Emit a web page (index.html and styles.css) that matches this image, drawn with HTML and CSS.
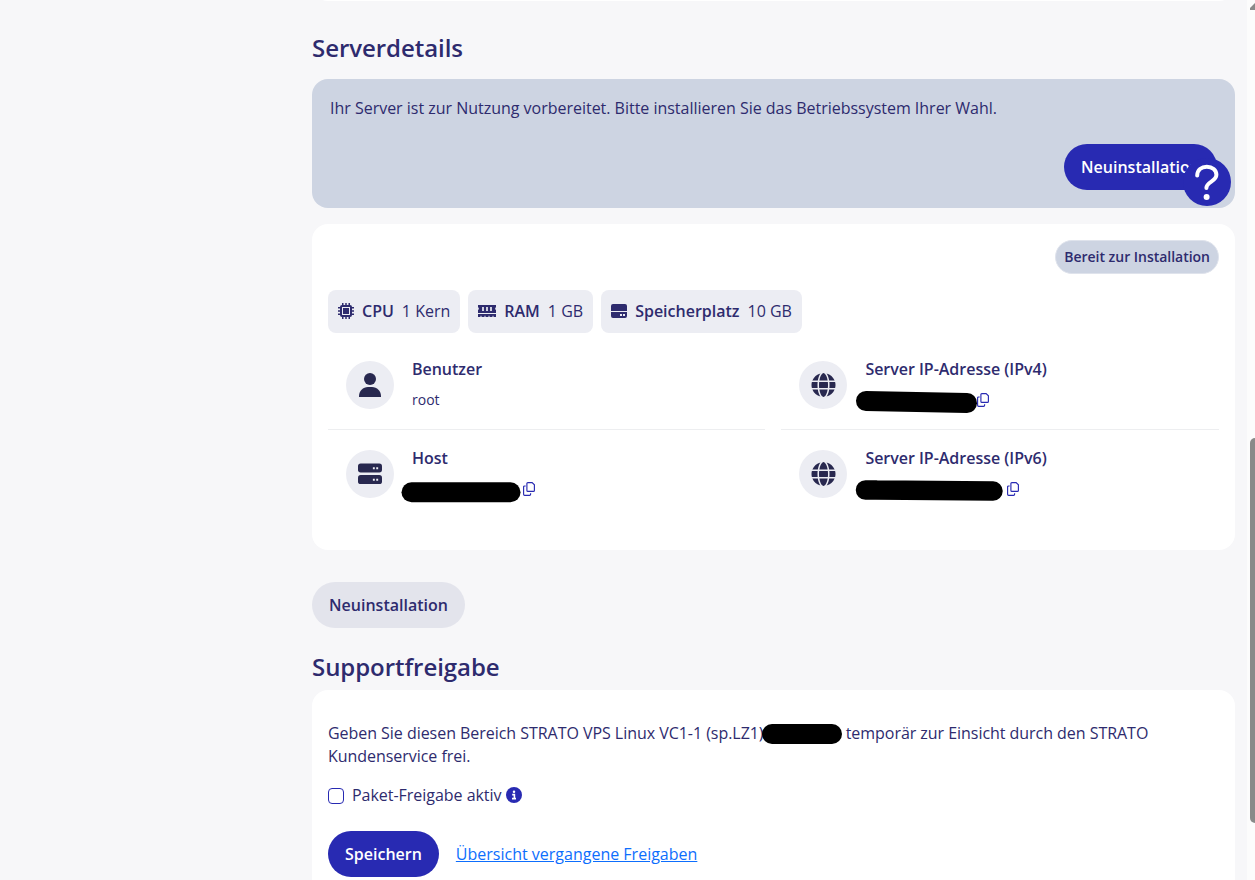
FILE: index.html
```html
<!DOCTYPE html>
<html lang="de">
<head>
<meta charset="utf-8">
<title>Serverdetails</title>
<link rel="stylesheet" href="styles.css">
</head>
<body>
<svg class="defs" width="0" height="0">
  <symbol id="globe" viewBox="0 0 512 512"><path d="M352 256c0 22.200-1.200 43.600-3.300 64H163.300c-2.200-20.400-3.300-41.800-3.300-64s1.200-43.600 3.300-64h185.400c2.200 20.400 3.300 41.800 3.300 64zm28.800-64h123.100c5.300 20.500 8.100 41.900 8.100 64s-2.800 43.500-8.100 64H380.800c2.100-20.600 3.200-42 3.200-64s-1.100-43.400-3.200-64zm112.600-32H376.700c-10-63.900-29.800-117.400-55.300-151.600 78.300 20.700 142 77.500 172 151.600zm-149.100 0H167.700c6.100-36.400 15.500-68.600 27-94.700 10.500-23.600 22.200-40.700 33.500-51.500C239.400 3.200 248.700 0 256 0s16.600 3.200 27.800 13.800c11.300 10.800 23 27.900 33.500 51.500 11.600 26 20.900 58.200 27 94.700zm-209 0H18.600C48.600 85.900 112.200 29.100 190.600 8.400 165.100 42.600 145.300 96.100 135.300 160zM8.100 192h123.100c-2.100 20.600-3.200 42-3.200 64s1.100 43.400 3.200 64H8.100C2.800 299.500 0 278.100 0 256s2.800-43.500 8.100-64zm186.600 254.600c-11.600-26-20.900-58.200-27-94.600h176.600c-6.100 36.400-15.500 68.600-27 94.600-10.500 23.600-22.200 40.700-33.500 51.500C272.600 508.800 263.300 512 256 512s-16.600-3.200-27.800-13.800c-11.300-10.800-23-27.900-33.500-51.600zM135.300 352c10 63.900 29.800 117.400 55.300 151.600C112.200 482.900 48.600 426.100 18.600 352h116.700zm358.100 0c-30 74.100-93.600 130.900-171.900 151.600 25.500-34.200 45.200-87.700 55.300-151.600h116.600z"/></symbol>
  <symbol id="copy" viewBox="0 0 12 14"><path d="M4.900.6h4.200l2.300 2.200v5.600q0 1-1 1H4.900q-1 0-1-1V1.600q0-1 1-1zM2.700 4H1.600q-1 0-1 1v7.300q0 1 1 1h5q1 0 1-1v-1.100" fill="none" stroke="currentColor" stroke-width="1.150"/></symbol>
</svg>
<div class="page">
  <main class="main">
    <div class="card-end"></div>
    <h2 class="title title-server">Serverdetails</h2>
    <section class="notice">
      <p class="notice-text">Ihr Server ist zur Nutzung vorbereitet. Bitte installieren Sie das Betriebssystem Ihrer Wahl.</p>
      <button class="btn primary">Neuinstallation</button>
      <button class="help" aria-label="Hilfe"><svg width="48" height="48" viewBox="0 0 48 48"><path d="M14.200 17.500c.2-5.500 4.300-8.800 9.600-8.800 5.600 0 9.600 3.300 9.600 8.100 0 7-10 6.500-10 13.200" fill="none" stroke="#fff" stroke-width="4" stroke-linecap="round"/><circle cx="23.600" cy="39" r="3" fill="#fff"/></svg></button>
    </section>
    <section class="card server">
      <div class="status-row"><span class="status">Bereit zur Installation</span></div>
      <div class="specs">
        <div class="spec"><svg width="16" height="16" viewBox="0 0 16 16"><path d="M4.750 0v16M8 0v16M11.250 0v16M0 4.750h16M0 8h16M0 11.250h16" stroke="currentColor" stroke-width="1.500"/><rect x="2" y="2" width="12" height="12" rx="2" fill="currentColor"/><rect x="4.500" y="4.500" width="7" height="7" fill="none" stroke="#ecedf3"/></svg><b>CPU</b><span>1 Kern</span></div>
        <div class="spec"><svg width="18" height="16" viewBox="0 0 18 16"><path d="M0 2h18v2.300a1.500 1.500 0 0 0 0 2.700V10H0V7a1.500 1.500 0 0 0 0-2.700zM0 11h18v3h-2.500v-1.200h-1V14h-3v-1.200h-1V14h-3v-1.200h-1V14h-3v-1.200h-1V14H0z" fill="currentColor"/><path d="M5 4v4M9 4v4M13 4v4" stroke="#ecedf3" stroke-width="1.700"/></svg><b>RAM</b><span>1 GB</span></div>
        <div class="spec"><svg width="16" height="16" viewBox="0 0 16 16"><path d="M2 1h12q2 0 2 2v5H0V3q0-2 2-2zM0 9h16v4q0 2-2 2H2q-2 0-2-2z" fill="currentColor"/><path d="M9 11h2v2H9zM12 11h2v2h-2z" fill="#ecedf3"/></svg><b>Speicherplatz</b><span>10 GB</span></div>
      </div>
      <div class="grid">
        <div class="item line"><span class="avatar"><svg width="22" height="24" viewBox="0 0 22 24"><circle cx="11" cy="6" r="6"/><path d="M0 24v-1c0-5 4-9 9-9h4c5 0 9 4 9 9v1z"/></svg></span><div class="detail"><h3>Benutzer</h3><p>root</p></div></div>
        <div class="item line right"><span class="avatar"><svg width="25" height="24" viewBox="0 0 25 24"><use href="#globe" width="25" height="24"/></svg></span><div class="detail"><h3>Server IP-Adresse (IPv4)</h3><svg class="copy copy-v4" width="12" height="14"><use href="#copy"/></svg><svg class="mask mask-v4" width="124" height="24"><path d="M11 11l101 2" stroke="#000" stroke-width="20" stroke-linecap="round"/></svg></div></div>
        <div class="item"><span class="avatar"><svg width="24" height="22" viewBox="0 0 25 22"><rect width="25" height="9.500" rx="2.800"/><rect y="12" width="25" height="9.500" rx="2.800"/><path d="M15.500 4h2v2h-2zM19 4h2v2h-2zM15.500 16h2v2h-2zM19 16h2v2h-2z" fill="#ecedf3"/></svg></span><div class="detail"><h3>Host</h3><svg class="copy copy-host" width="12" height="14"><use href="#copy"/></svg><svg class="mask mask-host" width="124" height="24"><path d="M10.500 11.300h99" stroke="#000" stroke-width="20" stroke-linecap="round"/></svg></div></div>
        <div class="item right"><span class="avatar"><svg width="25" height="24" viewBox="0 0 25 24"><use href="#globe" width="25" height="24"/></svg></span><div class="detail"><h3>Server IP-Adresse (IPv6)</h3><svg class="copy copy-v6" width="12" height="14"><use href="#copy"/></svg><svg class="mask mask-v6" width="152" height="24"><path d="M10.500 11h11M21 11l117 1" stroke="#000" stroke-width="19.500" stroke-linecap="round"/></svg></div></div>
      </div>
    </section>
    <button class="btn secondary">Neuinstallation</button>
    <h2 class="title title-support">Supportfreigabe</h2>
    <section class="card support">
      <p>Geben Sie diesen Bereich STRATO VPS Linux VC1-1 (sp.LZ1)<span class="redacted"></span> temporär zur Einsicht durch den STRATO<br>Kundenservice frei.</p>
      <label class="check"><input type="checkbox"><span>Paket-Freigabe aktiv</span><svg width="16" height="16" viewBox="0 0 16 16"><circle cx="8" cy="8" r="8" fill="#282ab2"/><circle cx="8" cy="4.700" r="1.250" fill="#fff"/><path d="M6.200 7.600H8.400v4M6 11.600h4" fill="none" stroke="#fff" stroke-width="1.600"/></svg></label>
      <div class="actions"><button class="btn primary">Speichern</button><a href="#">Übersicht vergangene Freigaben</a></div>
    </section>
  </main>
  <div class="scrollbar"><svg class="arrow" width="5" height="10"><path d="M0 10V8l5-5v7z" fill="#898a89"/></svg><div class="thumb"></div></div>
</div>
</body>
</html>
```
FILE: styles.css
```css
* { box-sizing: border-box; }
body { margin: 0; background: #f7f7f9; color: #2e2b6e; font: 400 16px/23px "Open Sans", sans-serif; overflow: hidden; }
h2, h3, p { margin: 0; }
button { font: inherit; border: 0; padding: 0; }
svg { display: block; flex: none; }
.defs { position: absolute; }
.page { display: flex; height: 880px; overflow: hidden; padding-left: 312px; }
.main { width: 923px; flex: none; }
.card-end { height: 16px; margin-top: -15px; background: #fff; border-radius: 0 0 16px 16px; }
.title { font-size: 24px; line-height: 32px; font-weight: 600; letter-spacing: -.05px; }
.title-server { margin: 31px 0 15px; }
.notice { position: relative; height: 129px; padding: 18px 18px 17px; background: #cdd4e2; border-radius: 16px; display: flex; flex-direction: column; }
.notice-text { letter-spacing: -.016px; }
.btn { display: inline-flex; align-items: center; justify-content: center; height: 46px; padding: 0 17px; border-radius: 23px; font-weight: 600; }
.primary { background: #282ab2; color: #fff; }
.notice .btn { align-self: flex-end; margin-top: 24px; width: 153px; }
.help { position: absolute; left: 871px; top: 79px; width: 48px; height: 48px; border-radius: 50%; background: #282ab2; }
.card { background: #fff; border-radius: 16px; }
.server { margin-top: 16px; height: 326px; padding: 16px; }
.status-row { display: flex; justify-content: flex-end; }
.status { height: 34px; padding: 0 8px; border: 1px solid #dfe3ec; border-radius: 17px; background: #cdd4e2; font-size: 14px; line-height: 32px; font-weight: 600; letter-spacing: -.02px; }
.specs { display: flex; gap: 8px; margin-top: 16px; }
.spec { display: flex; align-items: center; height: 43px; padding: 0 10px; border-radius: 8px; background: #ecedf3; }
.spec svg { margin-bottom: 1px; }
.spec b { margin: 0 8px; font-weight: 600; }
.grid { display: grid; grid-template-columns: 437px 438px; column-gap: 16px; margin-top: 8px; }
.item { display: flex; height: 89px; padding: 20px 18px 0; }
.right { padding-left: 18.400px; }
.line { border-bottom: 1px solid #edeef0; }
.avatar { width: 48px; height: 48px; border-radius: 50%; background: #ecedf3; color: #28284f; fill: currentColor; display: flex; align-items: center; justify-content: center; flex: none; }
.detail { position: relative; margin: -4px 0 0 18px; }
h3 { font-size: 16px; line-height: 24px; font-weight: 600; white-space: nowrap; letter-spacing: -.02px; }
.detail p { font-size: 14px; line-height: 22px; margin-top: 8px; }
.copy { position: absolute; top: 36px; color: #282ab2; }
.mask { position: absolute; left: -11px; }
.right .mask { left: -10.500px; }
.copy-v4 { left: 111.500px; }
.copy-host { left: 111px; }
.copy-v6 { left: 142px; }
.mask-v4 { top: 33px; }
.mask-host { top: 35px; }
.mask-v6 { top: 33px; }
.secondary { display: flex; width: 153px; margin-top: 32px; background: #e3e4ec; color: #2e2b6e; }
.title-support { margin: 23px 0 7px; }
.support { height: 210px; padding: 32px 16px 0; }
.redacted { display: inline-block; width: 80px; height: 20px; margin-left: -2px; border-radius: 10px; background: #000; vertical-align: -5px; }
.support p { line-height: 23px; height: 46px; letter-spacing: -.04px; white-space: nowrap; }
.check { display: flex; align-items: center; height: 24px; margin-top: 15px; letter-spacing: -.03px; }
.check input { appearance: none; width: 16px; height: 16px; margin: 2px 8px 0 0; border: 1px solid #282ab2; border-radius: 4px; background: #fff; }
.check svg { margin-left: 4px; }
.actions { display: flex; align-items: center; gap: 17px; margin-top: 24px; }
.actions a { color: #0d6efd; text-decoration: underline; }
.scrollbar { width: 8px; height: 880px; margin-left: 12px; padding-left: 3px; background: #fcfcfc; flex: none; overflow: hidden; }
.arrow { height: 10px; }
.thumb { width: 10px; height: 385px; margin-top: 428px; border-radius: 5px; background: #898a89; }
```
